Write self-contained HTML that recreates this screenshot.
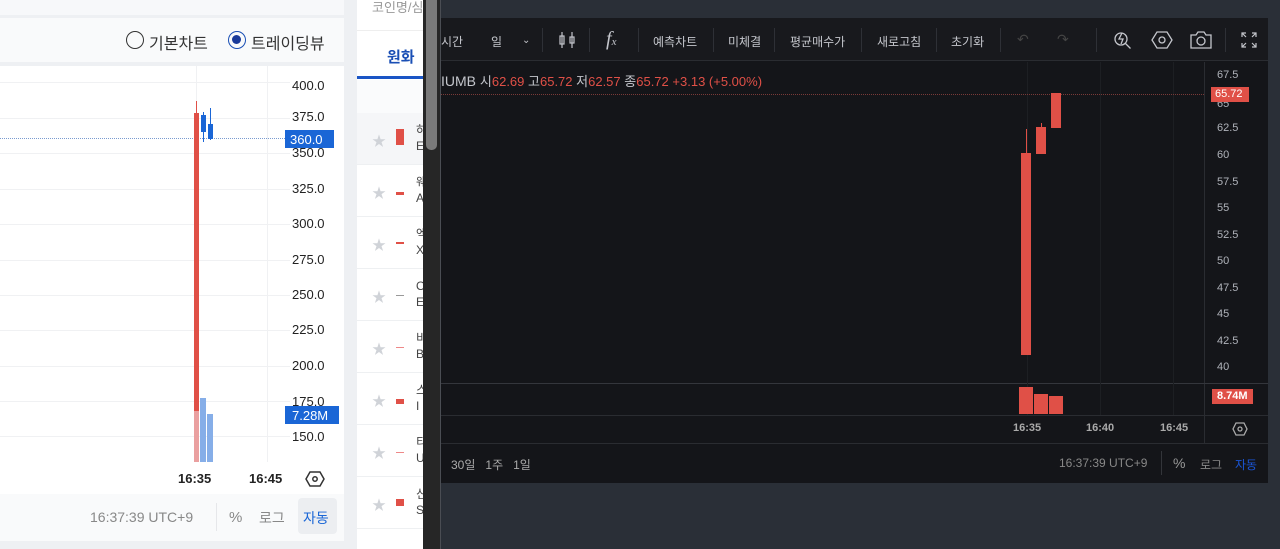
<!DOCTYPE html><html><head><meta charset="utf-8"><style>
*{margin:0;padding:0;box-sizing:border-box}
body{width:1280px;height:549px;overflow:hidden;background:#2a2f37;font-family:"Liberation Sans","Noto Sans CJK KR",sans-serif;position:relative}
.a{position:absolute}
.yl{position:absolute;left:292px;font-size:13px;color:#222}
.dy{position:absolute;left:1217px;font-size:11px;color:#b0b3ba}
.tb{position:absolute;top:33px;font-size:12px;color:#c4c6cc}
.sep{position:absolute;top:28px;width:1px;height:24px;background:#2e3036}
.hl{position:absolute;left:0;width:290px;height:1px;background:#f0f1f3}
.row{position:absolute;left:357px;width:66px;height:52px;border-bottom:1px solid #eef0f2;background:#fff}
.row .s{position:absolute;left:15px;top:18px;color:#d0d3d8;font-size:14px}
.row .t{position:absolute;left:59px;top:9px;font-size:12px;color:#444;line-height:16px}
</style></head><body>
<div class="a" style="left:0;top:0;width:423px;height:549px;background:#eef0f3"></div>
<div class="a" style="left:0;top:0;width:344px;height:15px;background:#f7f8fa"></div>
<div class="a" style="left:0;top:18px;width:344px;height:44px;background:#f9fafb"></div>
<div class="a" style="left:126px;top:31px;width:18px;height:18px;border:1.5px solid #333;border-radius:50%"></div>
<div class="a" style="left:149px;top:30px;font-size:16px;color:#333">기본차트</div>
<div class="a" style="left:228px;top:31px;width:18px;height:18px;border:1.5px solid #1a4fb5;border-radius:50%"><div style="position:absolute;left:3px;top:3px;width:9px;height:9px;border-radius:50%;background:#1a3a9a"></div></div>
<div class="a" style="left:251px;top:30px;font-size:16px;color:#333">트레이딩뷰</div>
<div class="a" style="left:0;top:66px;width:344px;height:428px;background:#fff"></div>
<div class="hl" style="top:82px"></div><div class="hl" style="top:118px"></div><div class="hl" style="top:153px"></div><div class="hl" style="top:189px"></div><div class="hl" style="top:224px"></div><div class="hl" style="top:260px"></div><div class="hl" style="top:295px"></div><div class="hl" style="top:330px"></div><div class="hl" style="top:366px"></div><div class="hl" style="top:401px"></div><div class="hl" style="top:436px"></div>
<div class="a" style="left:196px;top:66px;width:1px;height:396px;background:#f0f1f3"></div>
<div class="a" style="left:267px;top:66px;width:1px;height:396px;background:#f0f1f3"></div>
<div class="a" style="left:0;top:138px;width:285px;border-top:1px dotted #7a9bd0"></div>
<div class="yl" style="top:78px">400.0</div><div class="yl" style="top:109px">375.0</div><div class="yl" style="top:145px">350.0</div><div class="yl" style="top:181px">325.0</div><div class="yl" style="top:216px">300.0</div><div class="yl" style="top:252px">275.0</div><div class="yl" style="top:287px">250.0</div><div class="yl" style="top:322px">225.0</div><div class="yl" style="top:358px">200.0</div><div class="yl" style="top:394px">175.0</div><div class="yl" style="top:429px">150.0</div>
<div class="a" style="left:285px;top:130px;width:49px;height:18px;background:#1a66d6;color:#fff;font-size:13px;padding:2px 0 0 5px">360.0</div>
<div class="a" style="left:285px;top:406px;width:54px;height:18px;background:#1a66d6;color:#fff;font-size:13px;padding:2px 0 0 7px">7.28M</div>
<div class="a" style="left:196px;top:101px;width:1px;height:12px;background:#e05047"></div>
<div class="a" style="left:194px;top:113px;width:5px;height:298px;background:#e05047"></div>
<div class="a" style="left:194px;top:411px;width:5px;height:51px;background:#eaa0a0"></div>
<div class="a" style="left:203px;top:112px;width:1px;height:30px;background:#1a66d6"></div><div class="a" style="left:201px;top:115px;width:5px;height:17px;background:#1a66d6"></div>
<div class="a" style="left:210px;top:108px;width:1px;height:32px;background:#1a66d6"></div><div class="a" style="left:208px;top:124px;width:5px;height:15px;background:#1a66d6"></div>
<div class="a" style="left:200px;top:398px;width:6px;height:64px;background:#86aee8"></div>
<div class="a" style="left:207px;top:414px;width:6px;height:48px;background:#86aee8"></div>
<div class="a" style="left:178px;top:471px;font-size:13px;font-weight:bold;color:#222">16:35</div>
<div class="a" style="left:249px;top:471px;font-size:13px;font-weight:bold;color:#222">16:45</div>
<svg class="a" style="left:305px;top:470px" width="20" height="18" fill="none" stroke="#333" stroke-width="1.5"><path d="M5 2h10l4 7-4 7H5L1 9z"/><circle cx="10" cy="9" r="2.2"/></svg>
<div class="a" style="left:0;top:494px;width:344px;height:47px;background:#f9fafb"></div>
<div class="a" style="left:90px;top:509px;font-size:14px;color:#888">16:37:39 UTC+9</div>
<div class="a" style="left:216px;top:503px;width:1px;height:28px;background:#e6e7ea"></div>
<div class="a" style="left:229px;top:509px;font-size:15px;color:#888">%</div>
<div class="a" style="left:259px;top:508px;font-size:14px;color:#888">로그</div>
<div class="a" style="left:298px;top:498px;width:39px;height:36px;background:#eceef1;border-radius:4px"></div>
<div class="a" style="left:303px;top:508px;font-size:14px;color:#1a66d6">자동</div>
<div class="a" style="left:357px;top:0;width:66px;height:549px;background:#fff"></div>
<div class="a" style="left:372px;top:-3px;font-size:13px;color:#999">코인명/심</div>
<div class="a" style="left:357px;top:30px;width:66px;height:1px;background:#eee"></div>
<div class="a" style="left:387px;top:46px;font-size:15px;font-weight:bold;color:#1a4fb5">원화</div>
<div class="a" style="left:357px;top:76px;width:66px;height:3px;background:#1a55c5"></div>
<div class="a" style="left:357px;top:80px;width:66px;height:33px;background:#fafbfc"></div>
<div class="row" style="top:113px;background:#f5f6f8"><span class="s">★</span><div class="a" style="left:39px;top:16px;width:8px;height:16px;background:#e05047"></div><span class="t">하<br>E</span></div>
<div class="row" style="top:165px"><span class="s">★</span><div class="a" style="left:39px;top:27px;width:8px;height:3px;background:#e05047"></div><span class="t">웨<br>A</span></div>
<div class="row" style="top:217px"><span class="s">★</span><div class="a" style="left:39px;top:25px;width:8px;height:2px;background:#e05047"></div><span class="t">엑<br>X</span></div>
<div class="row" style="top:269px"><span class="s">★</span><div class="a" style="left:39px;top:26px;width:8px;height:1px;background:#999"></div><span class="t">O<br>E</span></div>
<div class="row" style="top:321px"><span class="s">★</span><div class="a" style="left:39px;top:26px;width:8px;height:1px;background:#e88"></div><span class="t">비<br>B</span></div>
<div class="row" style="top:373px"><span class="s">★</span><div class="a" style="left:39px;top:26px;width:8px;height:5px;background:#e05047"></div><span class="t">스<br>I</span></div>
<div class="row" style="top:425px"><span class="s">★</span><div class="a" style="left:39px;top:27px;width:8px;height:1px;background:#e88"></div><span class="t">티<br>U</span></div>
<div class="row" style="top:477px"><span class="s">★</span><div class="a" style="left:39px;top:22px;width:8px;height:7px;background:#e05047"></div><span class="t">신<br>S</span></div>
<div class="a" style="left:423px;top:0;width:17px;height:549px;background:#262626"></div>
<div class="a" style="left:426px;top:0;width:11px;height:150px;background:#7a7a7a;border-radius:0 0 5px 5px"></div>
<div class="a" style="left:440px;top:0;width:1px;height:549px;background:#4a4d53"></div>
<div class="a" style="left:441px;top:0;width:839px;height:549px;background:#2a2f37"></div>
<div class="a" style="left:441px;top:18px;width:827px;height:465px;background:#141519"></div>
<div class="a" style="left:441px;top:18px;width:827px;height:43px;background:#18191d;border-bottom:1px solid #2a2c31"></div>
<div class="tb" style="left:441px">시간</div>
<div class="tb" style="left:491px">일</div><div class="tb" style="left:522px;font-size:10px;top:35px">⌄</div>
<div class="sep" style="left:542px"></div>
<svg class="a" style="left:558px;top:30px" width="18" height="20" fill="none" stroke="#c4c6cc" stroke-width="1.2"><path d="M4 2v16M14 2v16"/><rect x="2" y="6" width="4" height="8"/><rect x="12" y="7" width="4" height="6"/></svg>
<div class="sep" style="left:589px"></div>
<div class="a" style="left:606px;top:28px;font-size:20px;color:#c4c6cc;font-family:'Liberation Serif',serif;font-style:italic">f<span style="font-size:11px">x</span></div>
<div class="sep" style="left:638px"></div>
<div class="tb" style="left:653px">예측차트</div><div class="sep" style="left:713px"></div>
<div class="tb" style="left:728px">미체결</div><div class="sep" style="left:774px"></div>
<div class="tb" style="left:790px">평균매수가</div><div class="sep" style="left:861px"></div>
<div class="tb" style="left:877px">새로고침</div><div class="sep" style="left:936px"></div>
<div class="tb" style="left:951px">초기화</div><div class="sep" style="left:1000px"></div>
<div class="tb" style="left:1017px;color:#444;font-size:14px;top:31px">↶</div><div class="tb" style="left:1057px;color:#444;font-size:14px;top:31px">↷</div>
<div class="sep" style="left:1096px"></div>
<svg class="a" style="left:1112px;top:29px" width="22" height="22" fill="none" stroke="#c4c6cc" stroke-width="1.3"><circle cx="9" cy="10" r="6"/><path d="M13.5 14.5l5 5M10 4l-3 6h4l-2 5"/></svg>
<svg class="a" style="left:1151px;top:29px" width="22" height="22" fill="none" stroke="#c4c6cc" stroke-width="1.3"><path d="M6 3h10l5 8-5 8H6L1 11z"/><circle cx="11" cy="11" r="3"/></svg>
<svg class="a" style="left:1189px;top:29px" width="24" height="22" fill="none" stroke="#c4c6cc" stroke-width="1.3"><path d="M2 6h5l2-3h6l2 3h5v13H2z"/><circle cx="12" cy="12" r="4"/></svg>
<div class="sep" style="left:1225px"></div>
<svg class="a" style="left:1240px;top:31px" width="18" height="18" fill="none" stroke="#c4c6cc" stroke-width="1.2"><path d="M2 6V2h4M2 2l4 4M16 6V2h-4M16 2l-4 4M2 12v4h4M2 16l4-4M16 12v4h-4M16 16l-4-4"/></svg>
<div class="a" style="left:1204px;top:62px;width:1px;height:381px;background:#2a2c31"></div>
<div class="a" style="left:441px;top:383px;width:827px;height:1px;background:#34363c"></div>
<div class="a" style="left:441px;top:415px;width:827px;height:1px;background:#2a2c31"></div>
<div class="a" style="left:441px;top:443px;width:827px;height:1px;background:#2a2c31"></div>
<div class="a" style="left:1100px;top:62px;width:1px;height:353px;background:#1d1f23"></div>
<div class="a" style="left:1027px;top:62px;width:1px;height:353px;background:#1d1f23"></div>
<div class="a" style="left:1173px;top:62px;width:1px;height:353px;background:#1d1f23"></div>
<div class="a" style="left:441px;top:94px;width:763px;border-top:1px dotted #7a3a38"></div>
<div class="a" style="left:441px;top:71px;font-size:14px;color:#c4c6cc;white-space:nowrap">IUMB <span style="font-size:13px">시<span style="color:#e05047">62.69</span> 고<span style="color:#e05047">65.72</span> 저<span style="color:#e05047">62.57</span> 종<span style="color:#e05047">65.72</span> <span style="color:#e05047">+3.13 (+5.00%)</span></span></div>
<div class="dy" style="top:69px">67.5</div><div class="dy" style="top:98px">65</div><div class="dy" style="top:122px">62.5</div><div class="dy" style="top:149px">60</div><div class="dy" style="top:176px">57.5</div><div class="dy" style="top:202px">55</div><div class="dy" style="top:229px">52.5</div><div class="dy" style="top:255px">50</div><div class="dy" style="top:282px">47.5</div><div class="dy" style="top:308px">45</div><div class="dy" style="top:335px">42.5</div><div class="dy" style="top:361px">40</div>
<div class="a" style="left:1211px;top:87px;width:38px;height:15px;background:#e05047;color:#fff;font-size:11px;padding:1px 0 0 4px">65.72</div>
<div class="a" style="left:1021px;top:153px;width:10px;height:202px;background:#e05047"></div>
<div class="a" style="left:1026px;top:129px;width:1px;height:25px;background:#e05047"></div>
<div class="a" style="left:1036px;top:127px;width:10px;height:27px;background:#e05047"></div>
<div class="a" style="left:1041px;top:123px;width:1px;height:4px;background:#e05047"></div>
<div class="a" style="left:1051px;top:93px;width:10px;height:35px;background:#e05047"></div>
<div class="a" style="left:1019px;top:387px;width:14px;height:27px;background:#e05047"></div>
<div class="a" style="left:1034px;top:394px;width:14px;height:20px;background:#e05047"></div>
<div class="a" style="left:1049px;top:396px;width:14px;height:18px;background:#e05047"></div>
<div class="a" style="left:1212px;top:389px;width:41px;height:15px;background:#e05047;color:#fff;font-size:11px;font-weight:bold;padding:1px 0 0 5px">8.74M</div>
<div class="a" style="left:1013px;top:422px;font-size:11px;font-weight:bold;color:#aaa">16:35</div>
<div class="a" style="left:1086px;top:422px;font-size:11px;font-weight:bold;color:#aaa">16:40</div>
<div class="a" style="left:1160px;top:422px;font-size:11px;font-weight:bold;color:#aaa">16:45</div>
<svg class="a" style="left:1232px;top:421px" width="16" height="16" fill="none" stroke="#aaa" stroke-width="1.3"><path d="M4 2h8l3 6-3 6H4L1 8z"/><circle cx="8" cy="8" r="2"/></svg>
<div class="a" style="left:451px;top:456px;font-size:12px;color:#aaa">30일 &nbsp;&nbsp;1주 &nbsp;&nbsp;1일</div>
<div class="a" style="left:1059px;top:456px;font-size:12px;color:#888">16:37:39 UTC+9</div>
<div class="a" style="left:1161px;top:451px;width:1px;height:24px;background:#33353a"></div>
<div class="a" style="left:1173px;top:455px;font-size:14px;color:#999">%</div>
<div class="a" style="left:1200px;top:456px;font-size:12px;color:#888">로그</div>
<div class="a" style="left:1235px;top:456px;font-size:12px;color:#1a55d6">자동</div>
</body></html>
